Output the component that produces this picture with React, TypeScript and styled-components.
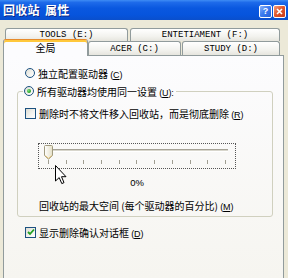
import React from "react";
import styled, { createGlobalStyle } from "styled-components";

const GlobalStyle = createGlobalStyle`
  html, body { margin: 0; padding: 0; background: #ECE9D8; }
  body { font-family: "Noto Sans CJK SC", "Liberation Sans", sans-serif; }
  * { box-sizing: border-box; }
`;

const Window = styled.div`
  position: relative;
  width: 288px;
  height: 278px;
  overflow: hidden;
  display: flex;
  flex-direction: column;
  background: #ECE9D8;
`;

const TitleBar = styled.div`
  flex-shrink: 0;
  height: 20px;
  display: flex;
  align-items: center;
  justify-content: space-between;
  padding: 0 2px 0 3px;
  background: linear-gradient(
    to bottom,
    #3E8CF5 0%,
    #1E6BEA 12%,
    #0A58E0 40%,
    #0654DC 75%,
    #0A4FCC 100%
  );
`;

const Title = styled.span`
  color: #fff;
  font: bold 12px "Noto Sans CJK SC", sans-serif;
  letter-spacing: 0.3px;
  text-shadow: 1px 1px 0 #0B2A8A;
  line-height: 20px;
  word-spacing: 2px;
`;

const TitleButtons = styled.div`
  display: flex;
  gap: 1px;
  margin-top: 2px;
`;

const TitleButton = styled.div<{ $close?: boolean }>`
  width: 13px;
  height: 13px;
  border: 1px solid #fff;
  border-radius: 2px;
  display: flex;
  align-items: center;
  justify-content: center;
  color: #fff;
  font: bold 9px "Liberation Sans", sans-serif;
  background: ${(p) =>
    p.$close
      ? "linear-gradient(135deg, #F4A080 0%, #E0592E 45%, #C83A1A 100%)"
      : "linear-gradient(135deg, #8DB4F8 0%, #3C7CF0 45%, #2461D8 100%)"};
`;

const TabArea = styled.div`
  flex-shrink: 0;
  margin-top: 8px;
  display: flex;
  flex-direction: column;
`;

const TabRow = styled.div<{ $pad: number }>`
  display: flex;
  align-items: flex-end;
  height: ${(p) => (p.$pad === 5 ? 13 : 14)}px;
  padding-left: ${(p) => p.$pad}px;
`;

const Tab = styled.div<{ $w: number; $ml?: number }>`
  width: ${(p) => p.$w}px;
  height: 100%;
  margin-left: ${(p) => p.$ml ?? 0}px;
  border: 1px solid #919B9C;
  border-bottom: none;
  border-radius: 3px 3px 0 0;
  background: linear-gradient(to bottom, #FFFFFF 0%, #F3F3EF 60%, #E6E5DE 100%);
  display: flex;
  align-items: center;
  justify-content: center;
  font: 9px "Liberation Mono", monospace;
  color: #000;
  white-space: pre;
`;

const SelectedTab = styled.div<{ $w: number }>`
  position: relative;
  z-index: 2;
  width: ${(p) => p.$w}px;
  height: 17px;
  margin-bottom: -1px;
  border: 1px solid #919B9C;
  border-top: 1px solid #E68B2C;
  border-bottom: none;
  border-radius: 3px 3px 0 0;
  box-shadow: inset 0 2px 0 #FFC83C;
  background: #FCFCFE;
  display: flex;
  align-items: center;
  justify-content: center;
  padding-bottom: 1px;
  font: 10px "Noto Sans CJK SC", sans-serif;
  color: #000;
`;

const Panel = styled.div`
  flex: 1;
  margin-left: 3px;
  width: 281px;
  border: 1px solid #919B9C;
  border-bottom: none;
  background: linear-gradient(to bottom, #FCFCFE 0%, #F6F5F0 100%);
  display: flex;
  flex-direction: column;
  padding: 10px 0 0 0;
`;

const OptionRow = styled.div<{ $ml: number; $mt?: number }>`
  display: flex;
  align-items: center;
  gap: 3px;
  height: 14px;
  margin-left: ${(p) => p.$ml}px;
  margin-top: ${(p) => p.$mt ?? 0}px;
  font: 10px "Noto Sans CJK SC", sans-serif;
  color: #000;
  white-space: pre;
`;

const Mn = styled.span`
  font: 9px "Liberation Sans", sans-serif;
  letter-spacing: -0.2px;
`;

const RadioCircle = styled.span<{ $on?: boolean }>`
  width: 10px;
  height: 10px;
  flex-shrink: 0;
  border-radius: 50%;
  border: 1px solid #1C5180;
  background: linear-gradient(135deg, #DCDCD4 0%, #F2F2EE 55%, #FFFFFF 100%);
  display: flex;
  align-items: center;
  justify-content: center;
  &::after {
    content: "";
    display: ${(p) => (p.$on ? "block" : "none")};
    width: 4px;
    height: 4px;
    border-radius: 50%;
    background: radial-gradient(circle at 35% 35%, #7BE07B, #21A121 70%);
  }
`;

const CheckBox = styled.span`
  width: 11px;
  height: 11px;
  flex-shrink: 0;
  border: 1px solid #1C5180;
  background: linear-gradient(135deg, #DCDCD4 0%, #F2F2EE 55%, #FFFFFF 100%);
  display: flex;
  align-items: center;
  justify-content: center;
`;

const GroupBox = styled.fieldset`
  margin: 4px 0 0 13px;
  width: 256px;
  padding: 0 0 5px 0;
  border: 1px solid #D0D0BF;
  border-radius: 3px;
  display: flex;
  flex-direction: column;
  min-width: 0;
`;

const Legend = styled.legend`
  margin-left: 5px;
  padding: 0 2px 0 1px;
  height: 14px;
  display: flex;
  align-items: center;
  gap: 3px;
  font: 10px "Noto Sans CJK SC", sans-serif;
  color: #000;
  white-space: pre;
`;

const SliderBox = styled.div`
  position: relative;
  margin: 23px 0 0 20px;
  width: 198px;
  height: 26px;
  border: 1px dotted #555;
  display: flex;
  flex-direction: column;
`;

const Track = styled.div`
  margin: 5px 0 0 7px;
  width: 182px;
  height: 3px;
  border-top: 1px solid #A5A296;
  border-bottom: 1px solid #fff;
  background: #D8D6CC;
`;

const TickRow = styled.div`
  margin: 8px 0 0 9px;
  width: 178px;
  height: 4px;
  display: flex;
  justify-content: space-between;
`;

const Tick = styled.span`
  width: 1px;
  height: 4px;
  background: #A09E92;
`;

const Thumb = styled.svg`
  position: absolute;
  left: 5px;
  top: 1px;
`;

const Percent = styled.div`
  margin: 8px 0 0 20px;
  width: 198px;
  height: 12px;
  text-align: center;
  font: 9.5px "Liberation Sans", sans-serif;
  line-height: 12px;
  color: #000;
`;

const Caption = styled.div`
  margin: 10px 0 0 21px;
  height: 12px;
  display: flex;
  align-items: center;
  font: 10px "Noto Sans CJK SC", sans-serif;
  color: #000;
  white-space: pre;
`;

const Cursor = styled.svg`
  position: absolute;
  left: 55px;
  top: 165px;
  z-index: 5;
`;

const Label: React.FC<{ text: string; k: string; suffix?: string }> = ({ text, k, suffix }) => (
  <span>
    {text}
    <Mn>
      {" ("}
      <u>{k}</u>
      {")"}
      {suffix ?? ""}
    </Mn>
  </span>
);

const Check = () => (
  <svg width="8" height="8" viewBox="0 0 8 8">
    <path d="M1 4 L3 6 L7 1.5" fill="none" stroke="#21A121" strokeWidth="1.8" />
  </svg>
);

export default function App() {
  const ticks = Array.from({ length: 11 });
  return (
    <>
      <GlobalStyle />
      <Window>
        <TitleBar>
          <Title>回收站 属性</Title>
          <TitleButtons>
            <TitleButton>?</TitleButton>
            <TitleButton $close>
              <svg width="7" height="7" viewBox="0 0 7 7">
                <path d="M1 1 L6 6 M6 1 L1 6" stroke="#fff" strokeWidth="1.6" />
              </svg>
            </TitleButton>
          </TitleButtons>
        </TitleBar>

        <TabArea>
          <TabRow $pad={5}>
            <Tab $w={123}>TOOLS (E:)</Tab>
            <Tab $w={150} $ml={2}>ENTETIAMENT (F:)</Tab>
          </TabRow>
          <TabRow $pad={3}>
            <SelectedTab $w={85}>全局</SelectedTab>
            <Tab $w={93}>ACER (C:)</Tab>
            <Tab $w={98} $ml={1}>STUDY (D:)</Tab>
          </TabRow>
        </TabArea>

        <Panel>
          <OptionRow $ml={21}>
            <RadioCircle />
            <Label text="独立配置驱动器" k="C" />
          </OptionRow>

          <GroupBox>
            <Legend>
              <RadioCircle $on />
              <Label text="所有驱动器均使用同一设置" k="U" suffix=":" />
            </Legend>
            <OptionRow $ml={7} $mt={8}>
              <CheckBox />
              <Label text="删除时不将文件移入回收站，而是彻底删除" k="R" />
            </OptionRow>
            <SliderBox>
              <Track />
              <TickRow>
                {ticks.map((_, i) => (
                  <Tick key={i} />
                ))}
              </TickRow>
              <Thumb width="9" height="15" viewBox="0 0 9 15">
                <defs>
                  <linearGradient id="tg" x1="0" y1="0" x2="1" y2="0">
                    <stop offset="0" stopColor="#FFFFFF" />
                    <stop offset="1" stopColor="#E4DFC6" />
                  </linearGradient>
                </defs>
                <path
                  d="M1.5 0.5 H7.5 Q8.5 0.5 8.5 1.5 V10.5 L4.5 14.2 L0.5 10.5 V1.5 Q0.5 0.5 1.5 0.5 Z"
                  fill="url(#tg)"
                  stroke="#A09A7E"
                  strokeWidth="1"
                />
                <path d="M1.3 10.6 L4.5 13.4 L7.7 10.6" fill="none" stroke="#E2C27A" strokeWidth="1" />
              </Thumb>
            </SliderBox>
            <Percent>0%</Percent>
            <Caption>
              <Label text="回收站的最大空间 (每个驱动器的百分比)" k="M" />
            </Caption>
          </GroupBox>

          <OptionRow $ml={21} $mt={8}>
            <CheckBox>
              <Check />
            </CheckBox>
            <Label text="显示删除确认对话框" k="D" />
          </OptionRow>
        </Panel>

        <Cursor width="12" height="20" viewBox="0 0 12 20">
          <path
            d="M0.5 0.5 L0.5 16 L4.2 12.6 L6.8 18.6 L9 17.6 L6.5 11.7 L11 11.7 Z"
            fill="#fff"
            stroke="#000"
            strokeWidth="1"
            strokeLinejoin="miter"
          />
        </Cursor>
      </Window>
    </>
  );
}
